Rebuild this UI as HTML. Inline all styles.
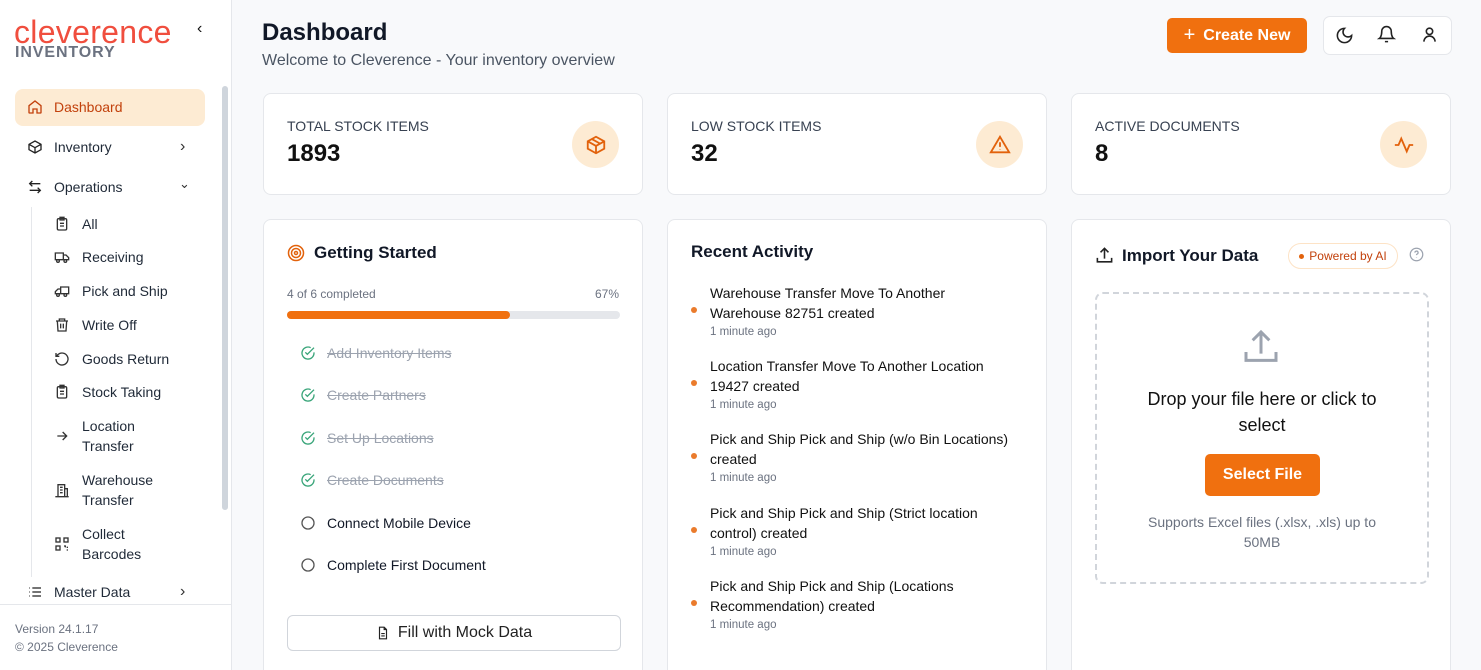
<!DOCTYPE html>
<html><head><meta charset="utf-8"><style>
*{box-sizing:border-box;margin:0;padding:0}
html,body{width:1481px;height:670px;overflow:hidden}
body{background:#f8f9fb;font-family:"Liberation Sans",sans-serif;color:#111827;position:relative}
.abs{position:absolute}
.side{left:0;top:0;width:232px;height:670px;background:#fff;border-right:1px solid #e5e7eb}
.nav{position:absolute;left:27px;font-size:14px;color:#1f2937;display:flex;align-items:center}
.nav svg{width:16px;height:16px;margin-right:11px}
.sub{position:absolute;left:54px;font-size:14px;color:#1f2937;line-height:20px}
.sub svg{position:absolute;left:0;width:16px;height:16px}
.sub span{position:absolute;left:28px;white-space:nowrap}
.card{position:absolute;background:#fff;border:1px solid #e5e7eb;border-radius:8px}
.lbl{position:absolute;left:23px;top:24px;font-size:14px;color:#374151}
.num{position:absolute;left:23px;top:46px;font-size:24px;font-weight:bold;color:#111}
.ic{position:absolute;right:23px;top:27px;width:47px;height:47px;border-radius:50%;background:#fdebd3;display:flex;align-items:center;justify-content:center}
.task{position:absolute;left:36px;font-size:14px;display:flex;align-items:center}
.task.d{color:#9ca3af;text-decoration:line-through}
.task svg{width:16px;height:16px;margin-right:11px}
.act{position:absolute;left:42px;width:300px}
.act .t{font-size:14px;line-height:20px;color:#111}
.act .m{font-size:11.5px;color:#6b7280;margin-top:3px}
.act:before{content:"";position:absolute;left:-19px;top:24px;width:6px;height:6px;border-radius:50%;background:#ea7b2c}
</style></head><body>
<div class="abs side">
 <div class="abs" style="left:14px;top:15px;font-size:32px;color:#f04e3e;letter-spacing:0.3px;line-height:34px">cleverence</div>
 <div class="abs" style="left:15px;top:44px;font-size:16px;font-weight:bold;color:#6b7280;letter-spacing:0.9px">INVENTORY</div>
 <div class="abs" style="left:197px;top:20px;font-size:16px;color:#111">‹</div>
 <div class="abs" style="left:222px;top:86px;width:6px;height:424px;background:#cfd5dc;border-radius:3px"></div>
 <div class="abs" style="left:15px;top:89px;width:190px;height:37px;background:#fdebd3;border-radius:8px"></div>
 <div class="nav" style="top:99px;color:#c2410c"><svg viewBox="0 0 24 24" fill="none" stroke="#c2410c" stroke-width="2"><path d="M3 10l9-7 9 7v10a1 1 0 0 1-1 1h-5v-6h-6v6H4a1 1 0 0 1-1-1z"/></svg>Dashboard</div>
 <div class="nav" style="top:139px"><svg viewBox="0 0 24 24" fill="none" stroke="#222" stroke-width="2"><path d="M21 8l-9-5-9 5v8l9 5 9-5zM3 8l9 5 9-5M12 13v8"/></svg>Inventory</div>
 <div class="abs" style="left:180px;top:138px;font-size:16px;color:#333">›</div>
 <div class="nav" style="top:179px"><svg viewBox="0 0 24 24" fill="none" stroke="#222" stroke-width="2"><path d="M8 3L4 7l4 4M4 7h16M16 21l4-4-4-4M20 17H4"/></svg>Operations</div>
 <div class="abs" style="left:179px;top:176px;font-size:13px;color:#333">⌄</div>
 <div class="abs" style="left:31px;top:207px;width:1px;height:370px;background:#e5e7eb"></div>
 <div class="sub" style="top:214px"><svg style="top:2px" viewBox="0 0 24 24" fill="none" stroke="#333" stroke-width="2"><rect x="5" y="4" width="14" height="17" rx="2"/><path d="M9 2h6v4H9zM9 11h6M9 15h6"/></svg><span>All</span></div>
 <div class="sub" style="top:247px"><svg style="top:2px" viewBox="0 0 24 24" fill="none" stroke="#333" stroke-width="2"><path d="M2 6h12v10H2zM14 9h4l4 4v3h-8"/><circle cx="6" cy="18" r="2"/><circle cx="17" cy="18" r="2"/></svg><span>Receiving</span></div>
 <div class="sub" style="top:281px"><svg style="top:2px" viewBox="0 0 24 24" fill="none" stroke="#333" stroke-width="2"><path d="M22 6H10v10h12zM10 9H6l-4 4v3h8"/><circle cx="6" cy="18" r="2"/><circle cx="17" cy="18" r="2"/></svg><span>Pick and Ship</span></div>
 <div class="sub" style="top:315px"><svg style="top:2px" viewBox="0 0 24 24" fill="none" stroke="#333" stroke-width="2"><path d="M3 6h18M8 6V3h8v3M5 6l1 15h12l1-15M10 10v7M14 10v7"/></svg><span>Write Off</span></div>
 <div class="sub" style="top:349px"><svg style="top:2px" viewBox="0 0 24 24" fill="none" stroke="#333" stroke-width="2"><path d="M3 12a9 9 0 1 0 3-6.7L3 8M3 3v5h5"/></svg><span>Goods Return</span></div>
 <div class="sub" style="top:382px"><svg style="top:2px" viewBox="0 0 24 24" fill="none" stroke="#333" stroke-width="2"><rect x="5" y="4" width="14" height="17" rx="2"/><path d="M9 2h6v4H9zM9 11h6M9 15h6"/></svg><span>Stock Taking</span></div>
 <div class="sub" style="top:416px"><svg style="top:12px" viewBox="0 0 24 24" fill="none" stroke="#333" stroke-width="2"><path d="M5 12h14M13 6l6 6-6 6"/></svg><span>Location<br>Transfer</span></div>
 <div class="sub" style="top:470px"><svg style="top:12px" viewBox="0 0 24 24" fill="none" stroke="#333" stroke-width="2"><path d="M6 22V4h10v18M16 10h4v12M2 22h20M9 8h4M9 12h4M9 16h4"/></svg><span>Warehouse<br>Transfer</span></div>
 <div class="sub" style="top:524px"><svg style="top:12px" viewBox="0 0 24 24" fill="none" stroke="#333" stroke-width="2"><rect x="3" y="3" width="6" height="6"/><rect x="15" y="3" width="6" height="6"/><rect x="3" y="15" width="6" height="6"/><path d="M15 15h2v2M21 21h-2M19 17h2"/></svg><span>Collect<br>Barcodes</span></div>
 <div class="nav" style="top:584px"><svg viewBox="0 0 24 24" fill="none" stroke="#222" stroke-width="2"><path d="M8 6h13M8 12h13M8 18h13M3 6h1M3 12h1M3 18h1"/></svg>Master Data</div>
 <div class="abs" style="left:180px;top:583px;font-size:16px;color:#333">›</div>
 <div class="abs" style="left:0;top:604px;width:231px;height:1px;background:#e5e7eb"></div>
 <div class="abs" style="left:15px;top:620px;font-size:12px;color:#6b7280;line-height:18px">Version 24.1.17<br>© 2025 Cleverence</div>
</div>

<div class="abs" style="left:262px;top:19px;font-size:24px;font-weight:bold">Dashboard</div>
<div class="abs" style="left:262px;top:52px;font-size:16px;color:#4b5563">Welcome to Cleverence - Your inventory overview</div>
<div class="abs" style="left:1167px;top:18px;width:140px;height:35px;background:#f0700f;border-radius:5px;color:#fff;font-size:16px;font-weight:bold;display:flex;align-items:center;justify-content:center"><span style="font-weight:normal;font-size:20px;margin-right:8px">+</span>Create New</div>
<div class="abs" style="left:1323px;top:16px;width:129px;height:39px;background:#fff;border:1px solid #e5e7eb;border-radius:7px"></div>
<svg class="abs" style="left:1335px;top:26px" width="19" height="19" viewBox="0 0 24 24" fill="none" stroke="#222" stroke-width="2"><path d="M12 3a6 6 0 0 0 9 9 9 9 0 1 1-9-9z"/></svg>
<svg class="abs" style="left:1377px;top:25px" width="19" height="19" viewBox="0 0 24 24" fill="none" stroke="#222" stroke-width="2"><path d="M6 8a6 6 0 0 1 12 0c0 7 3 9 3 9H3s3-2 3-9M10 21h4"/></svg>
<svg class="abs" style="left:1420px;top:25px" width="19" height="19" viewBox="0 0 24 24" fill="none" stroke="#222" stroke-width="2"><circle cx="12" cy="8" r="4"/><path d="M5 21a7 7 0 0 1 14 0"/></svg>

<div class="card" style="left:263px;top:93px;width:380px;height:102px"><div class="lbl">TOTAL STOCK ITEMS</div><div class="num">1893</div><div class="ic"><svg width="22" height="22" viewBox="0 0 24 24" fill="none" stroke="#e2620c" stroke-width="2"><path d="M21 8l-9-5-9 5v8l9 5 9-5zM3 8l9 5 9-5M12 13v8M7.5 5.5l9 5"/></svg></div></div>
<div class="card" style="left:667px;top:93px;width:380px;height:102px"><div class="lbl">LOW STOCK ITEMS</div><div class="num">32</div><div class="ic"><svg width="22" height="22" viewBox="0 0 24 24" fill="none" stroke="#e2620c" stroke-width="2"><path d="M12 3L2 20h20zM12 9v5M12 17v.5"/></svg></div></div>
<div class="card" style="left:1071px;top:93px;width:380px;height:102px"><div class="lbl">ACTIVE DOCUMENTS</div><div class="num">8</div><div class="ic"><svg width="22" height="22" viewBox="0 0 24 24" fill="none" stroke="#e2620c" stroke-width="2"><path d="M2 12h4l3-7 6 14 3-7h4"/></svg></div></div>

<div class="card" style="left:263px;top:219px;width:380px;height:470px">
 <svg class="abs" style="left:23px;top:24px" width="18" height="18" viewBox="0 0 24 24" fill="none" stroke="#e2620c" stroke-width="2"><circle cx="12" cy="12" r="10"/><circle cx="12" cy="12" r="6"/><circle cx="12" cy="12" r="2"/></svg>
 <div class="abs" style="left:50px;top:23px;font-size:17px;font-weight:bold">Getting Started</div>
 <div class="abs" style="left:23px;top:67px;font-size:12px;color:#6b7280">4 of 6 completed</div>
 <div class="abs" style="right:23px;top:67px;font-size:12px;color:#6b7280">67%</div>
 <div class="abs" style="left:23px;top:91px;width:333px;height:8px;background:#e5e7eb;border-radius:4px"><div style="width:223px;height:8px;background:#f0700f;border-radius:4px"></div></div>
 <div class="task d" style="top:125px"><svg viewBox="0 0 24 24" fill="none" stroke="#3aa57a" stroke-width="2"><path d="M21 11v1a9 9 0 1 1-5-8M8 11l3 3 10-10"/></svg>Add Inventory Items</div>
 <div class="task d" style="top:167px"><svg viewBox="0 0 24 24" fill="none" stroke="#3aa57a" stroke-width="2"><path d="M21 11v1a9 9 0 1 1-5-8M8 11l3 3 10-10"/></svg>Create Partners</div>
 <div class="task d" style="top:210px"><svg viewBox="0 0 24 24" fill="none" stroke="#3aa57a" stroke-width="2"><path d="M21 11v1a9 9 0 1 1-5-8M8 11l3 3 10-10"/></svg>Set Up Locations</div>
 <div class="task d" style="top:252px"><svg viewBox="0 0 24 24" fill="none" stroke="#3aa57a" stroke-width="2"><path d="M21 11v1a9 9 0 1 1-5-8M8 11l3 3 10-10"/></svg>Create Documents</div>
 <div class="task" style="top:295px"><svg viewBox="0 0 24 24" fill="none" stroke="#555" stroke-width="2"><circle cx="12" cy="12" r="9"/></svg>Connect Mobile Device</div>
 <div class="task" style="top:337px"><svg viewBox="0 0 24 24" fill="none" stroke="#555" stroke-width="2"><circle cx="12" cy="12" r="9"/></svg>Complete First Document</div>
 <div class="abs" style="left:23px;top:395px;width:334px;height:36px;border:1px solid #d1d5db;border-radius:6px;display:flex;align-items:center;justify-content:center;font-size:16px;color:#222"><svg width="14" height="14" viewBox="0 0 24 24" fill="none" stroke="#222" stroke-width="2" style="margin-right:8px"><path d="M14 2H6v20h12V6zM14 2v4h4M9 13h6M9 17h6"/></svg>Fill with Mock Data</div>
</div>

<div class="card" style="left:667px;top:219px;width:380px;height:470px">
 <div class="abs" style="left:23px;top:22px;font-size:17px;font-weight:bold">Recent Activity</div>
 <div class="act" style="top:63px"><div class="t">Warehouse Transfer Move To Another Warehouse 82751 created</div><div class="m">1 minute ago</div></div>
 <div class="act" style="top:136px"><div class="t">Location Transfer Move To Another Location 19427 created</div><div class="m">1 minute ago</div></div>
 <div class="act" style="top:209px"><div class="t">Pick and Ship Pick and Ship (w/o Bin Locations) created</div><div class="m">1 minute ago</div></div>
 <div class="act" style="top:283px"><div class="t">Pick and Ship Pick and Ship (Strict location control) created</div><div class="m">1 minute ago</div></div>
 <div class="act" style="top:356px"><div class="t">Pick and Ship Pick and Ship (Locations Recommendation) created</div><div class="m">1 minute ago</div></div>
</div>

<div class="card" style="left:1071px;top:219px;width:380px;height:470px">
 <svg class="abs" style="left:23px;top:26px" width="19" height="19" viewBox="0 0 24 24" fill="none" stroke="#222" stroke-width="2"><path d="M12 16V3M7 8l5-5 5 5M3 15v5h18v-5"/></svg>
 <div class="abs" style="left:50px;top:26px;font-size:17px;font-weight:bold">Import Your Data</div>
 <div class="abs" style="left:216px;top:23px;width:110px;height:26px;border:1px solid #fde3c6;border-radius:13px;font-size:12px;color:#c2410c;display:flex;align-items:center;justify-content:center"><span style="width:5px;height:5px;border-radius:50%;background:#e2620c;margin-right:5px"></span>Powered by AI</div>
 <svg class="abs" style="left:337px;top:27px" width="15" height="15" viewBox="0 0 24 24" fill="none" stroke="#9ca3af" stroke-width="2"><circle cx="12" cy="12" r="10"/><path d="M9.5 9a2.5 2.5 0 1 1 3.5 2.3c-.7.3-1 .9-1 1.7M12 17v.5"/></svg>
 <div class="abs" style="left:23px;top:72px;width:334px;height:292px;border:2px dashed #d1d5db;border-radius:8px"></div>
 <svg class="abs" style="left:169px;top:107px" width="40" height="40" viewBox="0 0 24 24" fill="none" stroke="#9ca3af" stroke-width="1.8"><path d="M12 16V3M7 8l5-5 5 5M3 15v5h18v-5"/></svg>
 <div class="abs" style="left:60px;top:166px;width:260px;text-align:center;font-size:18px;line-height:26px;color:#111">Drop your file here or click to select</div>
 <div class="abs" style="left:133px;top:234px;width:115px;height:42px;background:#f0700f;border-radius:5px;color:#fff;font-size:16px;font-weight:bold;display:flex;align-items:center;justify-content:center">Select File</div>
 <div class="abs" style="left:60px;top:292px;width:260px;text-align:center;font-size:14px;line-height:20px;color:#6b7280">Supports Excel files (.xlsx, .xls) up to 50MB</div>
</div>
</body></html>
